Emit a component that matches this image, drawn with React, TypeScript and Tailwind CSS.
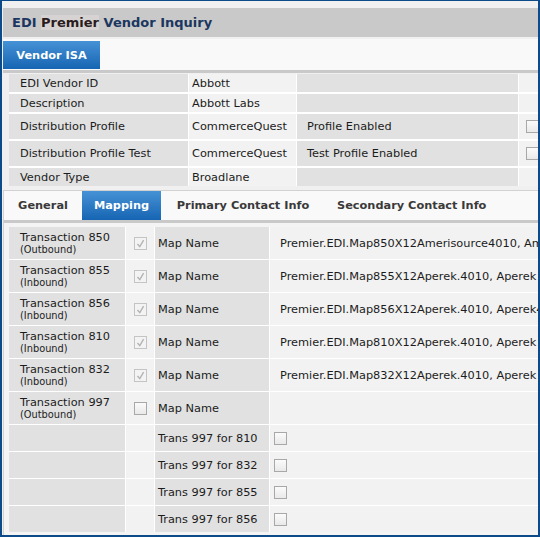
import React from "react";

const Box = ({ checked = false, disabled = false }: { checked?: boolean; disabled?: boolean }) => (
    <span
        className={`inline-flex w-[13px] h-[13px] shrink-0 items-center justify-center border ${
            disabled ? "border-[#c4c4c4] bg-[#f3f3f3]" : "border-[#a8a8a8] bg-gradient-to-b from-[#fbfbfb] to-[#e9e9e9]"
        }`}
    >
        {checked && (
            <svg width="11" height="11" viewBox="0 0 11 11">
                <polyline points="2.5,6 4.8,8.6 8.6,2.2" fill="none" stroke="#b3b3b3" strokeWidth="1.4" />
            </svg>
        )}
    </span>
);

const infoRows = [
    { label: "EDI Vendor ID", value: "Abbott", h: "h-[18px]" },
    { label: "Description", value: "Abbott Labs", h: "h-[18px]" },
    { label: "Distribution Profile", value: "CommerceQuest", extra: "Profile Enabled", h: "h-[25px]" },
    { label: "Distribution Profile Test", value: "CommerceQuest", extra: "Test Profile Enabled", h: "h-[25px]" },
    { label: "Vendor Type", value: "Broadlane", h: "h-[18px]" },
];

const transactions = [
    { code: "850", dir: "(Outbound)", checked: true, map: "Premier.EDI.Map850X12Amerisource4010, Amerisource" },
    { code: "855", dir: "(Inbound)", checked: true, map: "Premier.EDI.Map855X12Aperek.4010, Aperek" },
    { code: "856", dir: "(Inbound)", checked: true, map: "Premier.EDI.Map856X12Aperek.4010, Aperek4010" },
    { code: "810", dir: "(Inbound)", checked: true, map: "Premier.EDI.Map810X12Aperek.4010, Aperek" },
    { code: "832", dir: "(Inbound)", checked: true, map: "Premier.EDI.Map832X12Aperek.4010, Aperek" },
    { code: "997", dir: "(Outbound)", checked: false, map: "" },
];

const acks = ["810", "832", "855", "856"];

const label = "bg-[#e1e1e1]";
const value = "bg-[#f2f2f2]";

export default function App() {
    return (
        <div className="w-[540px] h-[537px] overflow-hidden bg-[#f0f0f0] border-[#0c4a8a] border-t border-x-2 border-b-2 font-['DejaVu_Sans',sans-serif] text-[11.33px] text-[#1c1c1c]">
            {/* header */}
            <div className="mt-[7px] ml-px h-[29px] bg-[#c9c9c9] flex items-center pl-[9px]">
                <h1 className="text-[13px] font-bold text-[#1b3660] leading-4">
                    EDI <span className="bg-[#d8d3d3] text-[#2a1c1c]">Premier</span> Vendor Inquiry
                </h1>
            </div>

            {/* top tab strip */}
            <div className="mt-[2px] ml-px h-[31px] bg-[#f9f9f9] pt-[2px]">
                <div className="w-[97px] h-[28px] flex items-center justify-center bg-gradient-to-b from-[#4592d6] to-[#1565b3] text-white font-bold">
                    Vendor ISA
                </div>
            </div>
            <div className="ml-px h-[3px] bg-[#c9c9c9]" />

            {/* info table */}
            <div className="pl-[7px] pt-px">
                <div className="grid grid-cols-[179px_107px_221px_40px] gap-x-px gap-y-[2px] bg-white">
                    {infoRows.map((r) => (
                        <React.Fragment key={r.label}>
                            <div className={`${label} ${r.h} flex items-center pl-[11px] whitespace-nowrap`}>{r.label}</div>
                            <div className={`${value} ${r.h} flex items-center pl-[3px] whitespace-nowrap`}>{r.value}</div>
                            <div className={`${label} ${r.h} flex items-center pl-[10px] whitespace-nowrap`}>{r.extra}</div>
                            <div className={`${value} ${r.h} flex items-center pl-[7px]`}>{r.extra && <Box />}</div>
                        </React.Fragment>
                    ))}
                </div>
            </div>

            {/* lower tab panel */}
            <div className="mt-[4px] ml-px border-l border-t border-[#d2d2d2] h-full">
                <div className="h-[29px] bg-[#f9f9f9] flex font-bold text-[#3a3a3a]">
                    <div className="w-[78px] flex items-center justify-center">General</div>
                    <div className="w-[79px] flex items-center justify-center bg-gradient-to-b from-[#4592d6] to-[#1565b3] text-white">
                        Mapping
                    </div>
                    <div className="w-[164px] flex items-center justify-center">Primary Contact Info</div>
                    <div className="pl-[12px] flex items-center whitespace-nowrap">Secondary Contact Info</div>
                </div>
                <div className="h-[3px] bg-[#c9c9c9]" />

                <div className="bg-[#f4f4f4] pt-[4px] pl-[5px] h-full">
                    <div className="grid grid-cols-[116px_28px_114px_300px] gap-px bg-white">
                        {transactions.map((t) => (
                            <React.Fragment key={t.code}>
                                <div className={`${label} h-[32px] flex flex-col justify-center pl-[11px] leading-[13px]`}>
                                    <span>Transaction {t.code}</span>
                                    <span className="text-[9.8px] leading-[12px]">{t.dir}</span>
                                </div>
                                <div className={`${value} h-[32px] flex items-center justify-center`}>
                                    <Box checked={t.checked} disabled={t.checked} />
                                </div>
                                <div className={`${label} h-[32px] flex items-center pl-[3px]`}>Map Name</div>
                                <div className={`${value} h-[32px] flex items-center pl-[10px] whitespace-nowrap overflow-hidden`}>
                                    {t.map}
                                </div>
                            </React.Fragment>
                        ))}
                        {acks.map((a) => (
                            <React.Fragment key={a}>
                                <div className={`${label} h-[26px]`} />
                                <div className={`${value} h-[26px]`} />
                                <div className={`${label} h-[26px] flex items-center pl-[3px] whitespace-nowrap`}>Trans 997 for {a}</div>
                                <div className={`${value} h-[26px] flex items-center pl-[4px]`}>
                                    <Box />
                                </div>
                            </React.Fragment>
                        ))}
                    </div>
                </div>
            </div>
        </div>
    );
}
